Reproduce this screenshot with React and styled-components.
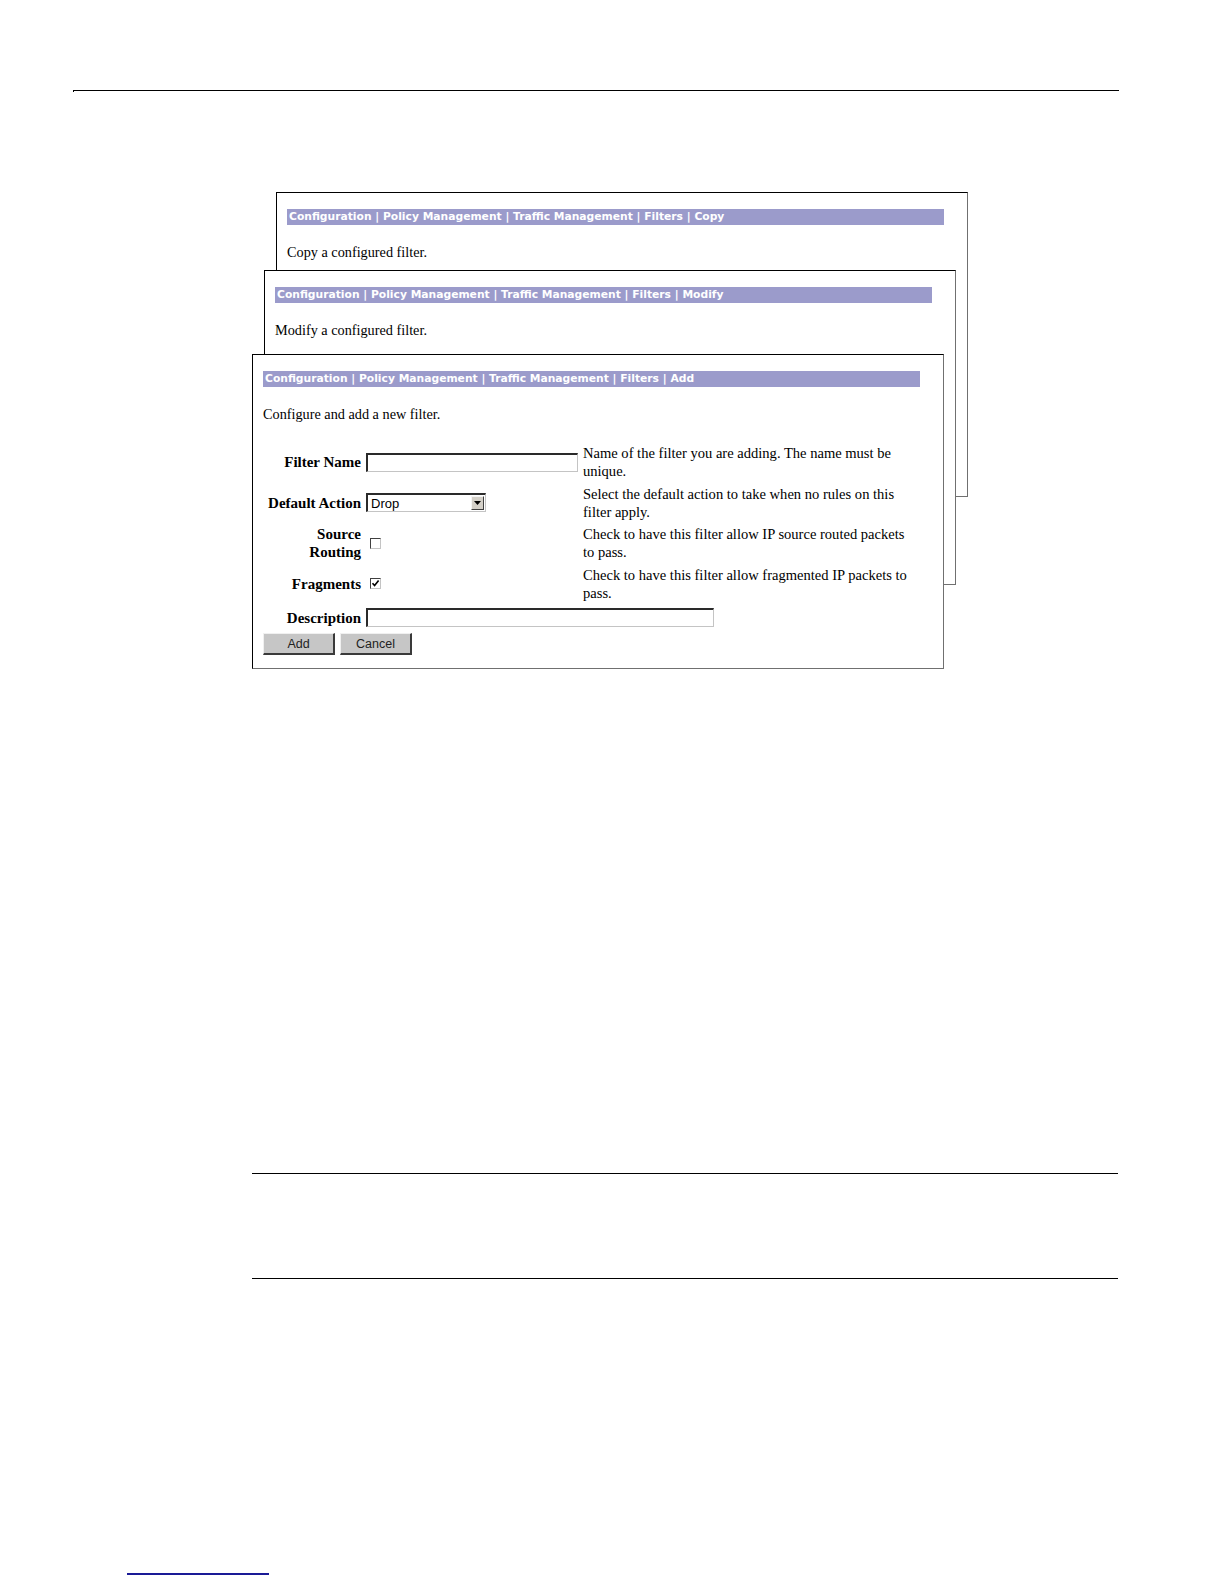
import React from 'react';
import styled, { createGlobalStyle } from 'styled-components';

const GlobalStyle = createGlobalStyle`
  html, body {
    margin: 0;
    padding: 0;
    background: #fff;
  }
  body {
    font-family: "Liberation Serif", "Times New Roman", serif;
    color: #000;
  }
`;

const crumbs = 'Configuration | Policy Management | Traffic Management | Filters';

const backWindows = [
  { id: 'copy', left: 24, top: 0, height: 305, action: 'Copy', intro: 'Copy a configured filter.' },
  { id: 'modify', left: 12, top: 78, height: 315, action: 'Modify', intro: 'Modify a configured filter.' },
];

const CheckMark = () => (
  <svg width="9" height="9" viewBox="0 0 9 9">
    <path d="M1.5 4.2 L3.6 6.6 L7.6 1.6" fill="none" stroke="#000" strokeWidth="1.6" />
  </svg>
);

const DropArrow = () => (
  <svg width="7" height="4" viewBox="0 0 7 4">
    <path d="M0 0 H7 L3.5 4 Z" fill="#000" />
  </svg>
);

const Window = ({ left, top, height, action, intro, children }) => (
  <StWindow $left={left} $top={top} $height={height}>
    <StTitleBar>
      {crumbs} | {action}
    </StTitleBar>
    <StIntro>{intro}</StIntro>
    {children}
  </StWindow>
);

const App = () => {
  return (
    <StPage>
      <GlobalStyle />
      <StTopRule />
      <StStage>
        {backWindows.map((w) => (
          <Window key={w.id} {...w} />
        ))}
        <Window left={0} top={162} height={315} action="Add" intro="Configure and add a new filter.">
          <StForm>
            <StLabel>Filter Name</StLabel>
            <StField>
              <StTextInput $width={212} />
            </StField>
            <StHelp>Name of the filter you are adding. The name must be unique.</StHelp>

            <StLabel>Default Action</StLabel>
            <StField>
              <StSelect>
                <span>Drop</span>
                <StDropButton>
                  <DropArrow />
                </StDropButton>
              </StSelect>
            </StField>
            <StHelp>Select the default action to take when no rules on this filter apply.</StHelp>

            <StLabel>
              Source
              <br />
              Routing
            </StLabel>
            <StField>
              <StCheckBox />
            </StField>
            <StHelp>Check to have this filter allow IP source routed packets to pass.</StHelp>

            <StLabel>Fragments</StLabel>
            <StField>
              <StCheckBox>
                <CheckMark />
              </StCheckBox>
            </StField>
            <StHelp>Check to have this filter allow fragmented IP packets to pass.</StHelp>

            <StLabel $lead>Description</StLabel>
            <StWideField $lead>
              <StTextInput $width={348} />
            </StWideField>
          </StForm>
          <StButtonRow>
            <StPushButton>Add</StPushButton>
            <StPushButton>Cancel</StPushButton>
          </StButtonRow>
        </Window>
      </StStage>
      <StNoteBlock />
      <StFooterLink />
    </StPage>
  );
};

const StPage = styled.div`
  width: 1224px;
  height: 1584px;
  overflow: hidden;
  padding-top: 90px;
  box-sizing: border-box;
`;

const StTopRule = styled.div`
  margin-left: 73px;
  width: 1045px;
  height: 1px;
  border-top: 1px solid #000;
  border-left: 1px solid #000;
`;

const StStage = styled.div`
  position: relative;
  margin: 100px 0 0 252px;
  width: 716px;
  height: 477px;
`;

const StWindow = styled.section`
  position: absolute;
  left: ${({ $left }) => $left}px;
  top: ${({ $top }) => $top}px;
  width: 692px;
  height: ${({ $height }) => $height}px;
  box-sizing: border-box;
  background: #fff;
  border-top: 1px solid #000;
  border-left: 1px solid #000;
  border-right: 1px solid #707070;
  border-bottom: 1px solid #707070;
  padding: 16px 23px 0 10px;
`;

const StTitleBar = styled.div`
  height: 16px;
  line-height: 16px;
  padding-left: 2px;
  background: #9b9bcb;
  color: #fff;
  font-family: "DejaVu Sans", Verdana, sans-serif;
  font-weight: bold;
  font-size: 10.74px;
  white-space: nowrap;
  overflow: hidden;
`;

const StIntro = styled.p`
  margin: 18px 0 0;
  font-size: 14.25px;
  line-height: 18px;
`;

const StForm = styled.div`
  display: grid;
  grid-template-columns: 98px 212px 331px;
  column-gap: 5px;
  row-gap: 4.5px;
  margin-top: 21px;
  align-items: center;
`;

const StLabel = styled.div`
  margin-top: ${({ $lead }) => ($lead ? 2 : 0)}px;
  font-weight: bold;
  font-size: 15px;
  line-height: 18px;
  text-align: right;
  white-space: nowrap;
`;

const StField = styled.div`
  display: flex;
  align-items: center;
  margin-top: ${({ $lead }) => ($lead ? 2 : 0)}px;
`;

const StWideField = styled(StField)`
  grid-column: 2 / 4;
`;

const StHelp = styled.div`
  font-size: 14.55px;
  line-height: 18px;
`;

const StTextInput = styled.div`
  width: ${({ $width }) => $width}px;
  height: 19px;
  box-sizing: border-box;
  background: #fff;
  border-style: solid;
  border-width: 2px 1px 1px 2px;
  border-color: #2a2a2a #c4c4c4 #c4c4c4 #2a2a2a;
`;

const StSelect = styled.div`
  display: flex;
  align-items: center;
  justify-content: space-between;
  width: 120px;
  height: 19px;
  box-sizing: border-box;
  padding: 0 1px 0 3px;
  background: #fff;
  border-style: solid;
  border-width: 2px 1px 1px 2px;
  border-color: #2a2a2a #c4c4c4 #c4c4c4 #2a2a2a;
  font-family: "Liberation Sans", Arial, sans-serif;
  font-size: 13px;
`;

const StDropButton = styled.span`
  display: flex;
  align-items: center;
  justify-content: center;
  width: 13px;
  height: 14px;
  box-sizing: border-box;
  background: #d4d0c8;
  border-style: solid;
  border-width: 1px;
  border-color: #f4f4f4 #404040 #404040 #f4f4f4;
`;

const StCheckBox = styled.span`
  display: flex;
  align-items: center;
  justify-content: center;
  width: 11px;
  height: 11px;
  margin-left: 4px;
  box-sizing: border-box;
  background: #fff;
  border-style: solid;
  border-width: 1px;
  border-color: #404040 #c4c4c4 #c4c4c4 #404040;
`;

const StButtonRow = styled.div`
  display: flex;
  gap: 5px;
  margin-top: 6px;
`;

const StPushButton = styled.button`
  width: 72px;
  height: 22px;
  padding: 0;
  background: #c6c6c6;
  border-style: solid;
  border-width: 1px 2px 2px 1px;
  border-color: #f0f0f0 #3a3a3a #3a3a3a #f0f0f0;
  font-family: "Liberation Sans", Arial, sans-serif;
  font-size: 12.5px;
  color: #222;
`;

const StNoteBlock = styled.div`
  margin: 504px 0 0 252px;
  width: 866px;
  height: 104px;
  border-top: 1px solid #000;
  border-bottom: 1px solid #000;
`;

const StFooterLink = styled.span`
  display: block;
  margin: 294px 0 0 127px;
  width: 142px;
  border-bottom: 2px solid #1a1a96;
`;

export default App;
